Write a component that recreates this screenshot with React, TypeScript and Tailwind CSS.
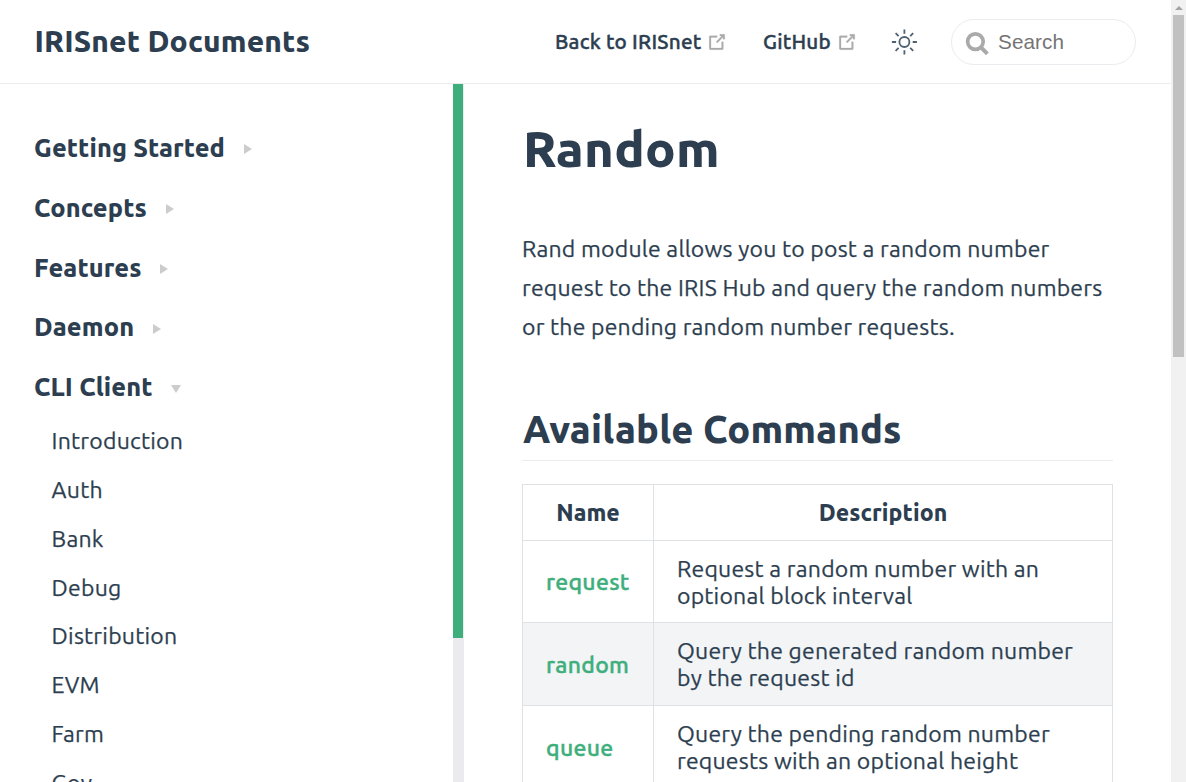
import { Fragment } from "react";

const groups = ["Getting Started", "Concepts", "Features", "Daemon"];
const pages = ["Introduction", "Auth", "Bank", "Debug", "Distribution", "EVM", "Farm", "Gov"];
const commands = [
  { name: "request", lines: ["Request a random number with an", "optional block interval"] },
  { name: "random", lines: ["Query the generated random number", "by the request id"] },
  { name: "queue", lines: ["Query the pending random number", "requests with an optional height"] },
];

function OutboundIcon() {
  return (
    <svg viewBox="0 0 100 100" className="mt-0.5 ml-[5px] h-[22px] w-[22px] shrink-0 fill-[#aaa] stroke-[#aaa]">
      <path d="M18.8,85.1h56l0,0c2.2,0,4-1.8,4-4v-32h-8v28h-48v-48h28v-8h-32l0,0c-2.2,0-4,1.8-4,4v56C14.8,83.3,16.6,85.1,18.8,85.1z" />
      <polygon points="45.7,48.7 51.3,54.3 77.2,28.5 77.2,37.2 85.2,37.2 85.2,14.9 62.8,14.9 62.8,22.9 71.5,22.9" />
    </svg>
  );
}

function SunIcon() {
  return (
    <svg viewBox="0 0 26 26" className="ml-px h-[26px] w-[26px] fill-none stroke-[#4f6072] stroke-[1.8]">
      <circle cx="13.4" cy="13" r="5" />
      <path d="M13.4 .5v4.2M13.4 21.3v4.2M.9 13h4.2M21.7 13h4.2M4.6 4.2l3 3M19.2 18.8l3 3M4.6 21.8l3-3M19.2 7.2l3-3" />
    </svg>
  );
}

function SearchIcon() {
  return (
    <svg viewBox="0 0 24 24" className="mt-[3px] h-6 w-6 fill-none stroke-[#aaa]">
      <circle cx="10.4" cy="10.6" r="7.8" strokeWidth="3.7" />
      <path d="M15.6 16l6.8 6.8" strokeWidth="4" />
    </svg>
  );
}

export default function App() {
  return (
    <div className="flex h-[782px] w-[1186px] overflow-hidden bg-white font-[Ubuntu,'Noto_Sans',sans-serif] text-[23px] text-[#2c3e50]">
      <div className="flex w-[1171px] flex-col">
        <header className="flex h-[84px] shrink-0 items-center border-b border-[#eaecef] pr-[35px] pl-[34.5px]">
          <span className="text-[29.9px] font-extrabold tracking-[0.15px]">IRISnet Documents</span>
          <nav className="ml-auto flex items-center text-[20.7px] font-medium tracking-[0.22px]">
            <a className="flex w-[208px] items-center [-webkit-text-stroke:0.4px]">Back to IRISnet<OutboundIcon /></a>
            <a className="flex w-[127px] items-center [-webkit-text-stroke:0.4px]">GitHub<OutboundIcon /></a>
          </nav>
          <SunIcon />
          <div className="ml-[34px] flex h-[46px] w-[185px] items-center rounded-full border border-[#eaecef] pl-[13px] font-['Liberation_Sans',sans-serif] text-[20.7px] tracking-[0.1px] text-[#757575]">
            <SearchIcon />
            <span className="ml-[9px]">Search</span>
          </div>
        </header>
        <div className="flex min-h-0 flex-1">
          <aside className="flex w-[464px] shrink-0">
            <div className="flex flex-1 flex-col pt-[34px] pl-[34px]">
              {groups.map((g) => (
                <p key={g} className="flex h-[59.8px] shrink-0 items-center text-[25.3px] font-extrabold tracking-[0.12px]">
                  {g}
                  <i className="mt-[3px] ml-[18.7px] border-y-[5px] border-l-8 border-y-transparent border-l-[#ccc]" />
                </p>
              ))}
              <p className="flex h-[59.8px] shrink-0 items-center text-[25.3px] font-extrabold tracking-[0.12px]">
                CLI Client
                <i className="mt-[3px] ml-[18px] border-x-[5px] border-t-8 border-x-transparent border-t-[#ccc]" />
              </p>
              {pages.map((p) => (
                <a key={p} className="flex h-[48.8px] shrink-0 items-center pl-[17.6px] tracking-[0.23px] [-webkit-text-stroke:0.25px]">{p}</a>
              ))}
            </div>
            <div className="w-[11px] bg-[#ebebef]">
              <div className="h-[554px] w-[10px] bg-[#3eaf7c]" />
            </div>
          </aside>
          <main className="flex-1 px-[58px]">
            <h1 className="mt-[33px] pl-px text-[50.6px] leading-[64px] font-extrabold tracking-[0.3px]">Random</h1>
            <p className="mt-[48px] leading-[39px] tracking-[0.21px] [-webkit-text-stroke:0.25px]">
              Rand module allows you to post a random number<br />
              request to the IRIS Hub and query the random numbers<br />
              or the pending random number requests.
            </p>
            <h2 className="mt-[58px] h-[57px] border-b border-[#eaecef] pl-px text-[37.95px] leading-[50px] font-extrabold tracking-[0.18px]">Available Commands</h2>
            <table className="mt-[23px] w-[591px] border-collapse leading-[27px]">
              <thead>
                <tr className="h-[56px]">
                  <th className="w-[131px] border border-[#dfe2e5] p-0 font-extrabold">Name</th>
                  <th className="border border-[#dfe2e5] p-0 font-extrabold tracking-[0.1px]">Description</th>
                </tr>
              </thead>
              <tbody>
                {commands.map((c) => (
                  <tr key={c.name} className="h-[83px] first:h-[82px] even:bg-[#f2f4f6]">
                    <td className="border border-[#dfe2e5] px-[23px] py-0 font-medium tracking-[0.3px] text-[#3eaf7c] [-webkit-text-stroke:0.4px]">{c.name}</td>
                    <td className="border border-[#dfe2e5] px-[23px] py-0 tracking-[0.22px] [-webkit-text-stroke:0.25px]">
                      {c.lines.map((l) => (
                        <Fragment key={l}>{l}<br /></Fragment>
                      ))}
                    </td>
                  </tr>
                ))}
              </tbody>
            </table>
          </main>
        </div>
      </div>
      <div className="flex w-[15px] flex-col items-center bg-[#f1f1f1]">
        <div className="flex h-[15px] items-center">
          <i className="border-x-4 border-b-4 border-x-transparent border-b-[#a3a3a3]" />
        </div>
        <div className="h-[342px] w-[11px] bg-[#c1c1c1]" />
      </div>
    </div>
  );
}
